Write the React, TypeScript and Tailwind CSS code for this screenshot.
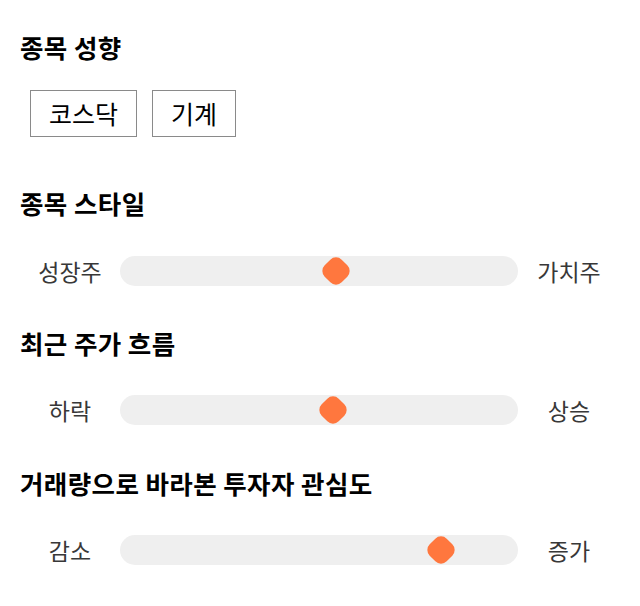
import React from "react";

type SliderRow = { left: string; right: string; value: number };

const font = { fontFamily: '"Noto Sans CJK KR", "Noto Sans", sans-serif' };

function Heading({ children, className = "" }: { children: React.ReactNode; className?: string }) {
  return (
    <h2 className={`h-[30px] text-[25.5px] leading-[30px] tracking-[0.4px] font-bold text-black ${className}`}>
      {children}
    </h2>
  );
}

function Slider({ row, className = "" }: { row: SliderRow; className?: string }) {
  return (
    <div className={`flex items-center h-[30px] ${className}`}>
      <div className="w-[100px] text-center text-[23px] text-[#383838]">{row.left}</div>
      <div className="relative flex-1 h-[30px] rounded-full bg-[#efefef]">
        <div
          className="absolute top-1/2 w-[24px] h-[24px] -translate-x-1/2 -translate-y-1/2 rotate-45 rounded-[8px] bg-[#ff773e]"
          style={{ left: `${row.value}%` }}
        />
      </div>
      <div className="w-[102px] text-center text-[23px] text-[#383838]">{row.right}</div>
    </div>
  );
}

export default function App() {
  const style: SliderRow = { left: "성장주", right: "가치주", value: 54.3 };
  const trend: SliderRow = { left: "하락", right: "상승", value: 53.5 };
  const volume: SliderRow = { left: "감소", right: "증가", value: 80.6 };

  return (
    <div className="w-[640px] h-[606px] bg-white px-[20px] pt-[32px]" style={font}>
      {/* 종목 성향 */}
      <Heading>종목 성향</Heading>
      <div className="flex gap-[15px] ml-[10px] mt-[28px]">
        {["코스닥", "기계"].map((tag) => (
          <span
            key={tag}
            className="h-[47px] px-[18px] flex items-center border border-[#8a8a8a] text-[25px] text-black"
          >
            {tag}
          </span>
        ))}
      </div>

      <Heading className="mt-[51px]">종목 스타일</Heading>
      <Slider row={style} className="mt-[38px]" />

      <Heading className="mt-[42px]">최근 주가 흐름</Heading>
      <Slider row={trend} className="mt-[37px]" />

      <Heading className="mt-[43px]">거래량으로 바라본 투자자 관심도</Heading>
      <Slider row={volume} className="mt-[37px]" />
    </div>
  );
}
